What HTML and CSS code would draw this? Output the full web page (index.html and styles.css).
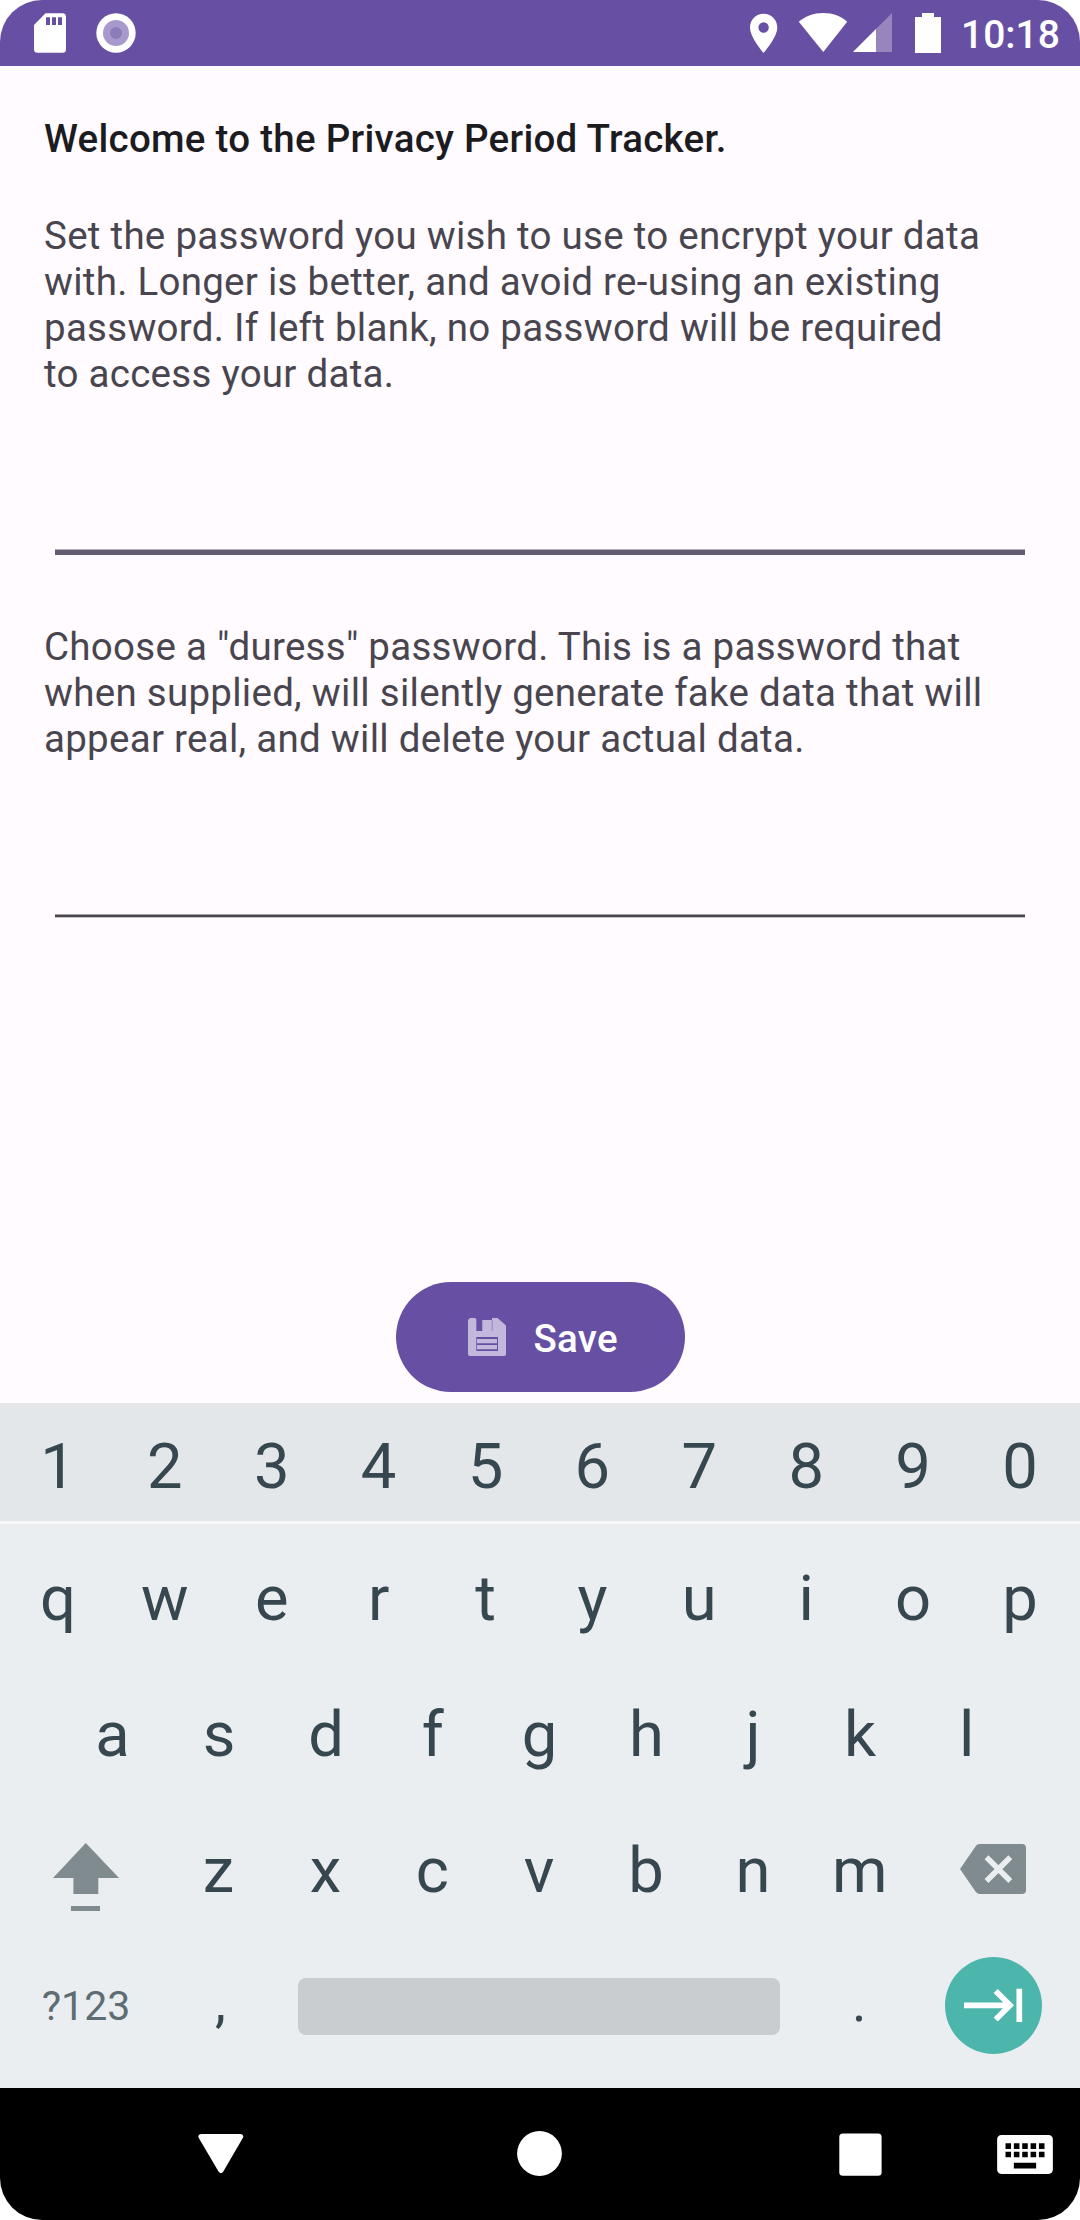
FILE: index.html
```html
<!DOCTYPE html>
<html lang="en">
<head>
<meta charset="utf-8">
<title>Privacy Period Tracker</title>
<link rel="stylesheet" href="styles.css">
</head>
<body>
<div class="screen">
  <header class="status">
    <div class="status-group">
      <svg width="32" height="40" viewBox="0 0 32 40"><path fill="#fff" fill-rule="evenodd" d="M11.500 0.300H28.500Q32 .3 32 3.800V36.200Q32 39.700 28.500 39.700H3.500Q0 39.700 0 36.200V12ZM12 4.300V12H16V4.300ZM18 4.300V12H22V4.300ZM24 4.300V12H28V4.300Z"/></svg>
      <svg class="ring" width="40" height="40" viewBox="0 0 40 40"><circle cx="20" cy="20" r="19.700" fill="#fff"/><circle cx="20" cy="20" r="13" fill="#a899cd"/><circle cx="20" cy="20" r="6" fill="#8e7bba"/></svg>
    </div>
    <div class="status-group">
      <svg width="28" height="40" viewBox="0 0 28 40"><path fill="#fff" fill-rule="evenodd" d="M13.600 .8C6 .8 0 6.800 0 14.500C0 24.500 13.600 40 13.600 40S27.300 24.500 27.300 14.500C27.300 6.800 21.200 .8 13.600 .8ZM13.600 9.300A5.200 5.200 0 1 1 13.600 19.700A5.200 5.200 0 1 1 13.600 9.300Z"/></svg>
      <svg class="wifi" width="50" height="40" viewBox="0 0 50 40"><path fill="#fff" d="M.8 8.700C7.500 3 15.500 0 25.300 0S43 3 49.200 8.700L25.300 39Z"/></svg>
      <svg class="signal" width="39" height="40" viewBox="0 0 39 40"><path fill="#9785bd" d="M0 39L39 0V39Z"/><path fill="#fff" d="M0 39L23 16V39Z"/></svg>
      <svg class="battery" width="26" height="40" viewBox="0 0 26 40"><path fill="#fff" d="M7 0H19V4H26V40H0V4H7Z"/></svg>
      <span class="clock">10:18</span>
    </div>
  </header>

  <main class="form">
    <h1 class="title">Welcome to the Privacy Period Tracker.</h1>
    <p class="hint">Set the password you wish to use to encrypt your data<br>with. Longer is better, and avoid re-using an existing<br>password. If left blank, no password will be required<br>to access your data.</p>
    <div class="field field-active"></div>
    <p class="hint hint-duress">Choose a "duress" password. This is a password that<br>when supplied, will silently generate fake data that will<br>appear real, and will delete your actual data.</p>
    <div class="field field-idle"></div>
    <button class="save">
      <svg width="38" height="38" viewBox="0 0 38 38"><path fill="#c3b8dc" fill-rule="evenodd" d="M2 0H7L8.300 1.300V13H14.300V2H24V0H29.500L38 7.500V36Q38 38 36 38H2Q0 38 0 36V2ZM8.300 19V33H30V19Z"/><path fill="#a595cb" d="M23.500 2H25V13H23.500Z"/><path fill="#c3b8dc" d="M9 21H29V25.200H9ZM9 27H29V31.200H9Z"/></svg>
      <span class="save-label">Save</span>
    </button>
  </main>

  <section class="keyboard">
    <div class="row digits"><span>1</span><span>2</span><span>3</span><span>4</span><span>5</span><span>6</span><span>7</span><span>8</span><span>9</span><span>0</span></div>
    <div class="row"><span>q</span><span>w</span><span>e</span><span>r</span><span>t</span><span>y</span><span>u</span><span>i</span><span>o</span><span>p</span></div>
    <div class="row row-home"><span>a</span><span>s</span><span>d</span><span>f</span><span>g</span><span>h</span><span>j</span><span>k</span><span>l</span></div>
    <div class="row row-shift">
      <svg class="shift" width="66" height="68" viewBox="0 0 66 68"><path fill="#808b8f" d="M32.800 0L66 35H45.300V51H20.400V35H0ZM18 63H47V68H18Z"/></svg>
      <span>z</span><span>x</span><span>c</span><span>v</span><span>b</span><span>n</span><span>m</span>
      <svg class="backspace" width="66" height="50" viewBox="0 0 66 50"><path fill="#808b8f" d="M19.500 0H62Q66 0 66 4V46Q66 50 62 50H19.500Q17 50 15.500 47.600L0 25L15.500 2.400Q17 0 19.500 0Z"/><path stroke="#ebeef1" stroke-width="5.500" d="M26.500 13.200L50.300 37M50.300 13.200L26.500 37"/></svg>
    </div>
    <div class="row row-space">
      <span class="symbols">?123</span>
      <span class="punct">,</span>
      <span class="space"></span>
      <span class="punct">.</span>
      <span class="next"><svg width="97" height="97" viewBox="0 0 97 97"><circle cx="48.500" cy="48.500" r="48.500" fill="#4db6ac"/><path fill="none" stroke="#fff" stroke-width="5.700" d="M19 48.300H64M50.700 34L65 48.300L50.700 62.600M74.300 31.700V65"/></svg></span>
    </div>
  </section>

  <nav class="nav">
    <svg width="46" height="40" viewBox="0 0 46 40"><path fill="#fff" d="M3 0H42.500Q46.500 .5 44.800 4L25.300 37.500Q23 41 20.500 37.500L.8 4Q-.9 .5 3 0Z"/></svg>
    <svg class="home" width="45" height="45" viewBox="0 0 45 45"><circle cx="22.500" cy="22.500" r="22.400" fill="#fff"/></svg>
    <svg class="recent" width="43" height="43" viewBox="0 0 43 43"><rect x=".3" y=".5" width="42.300" height="42.300" rx="3.500" fill="#fff"/></svg>
    <svg class="ime" width="56" height="39" viewBox="2 5 20 14"><path fill="#fff" d="M20.500 5H3.500C2.700 5 2 5.700 2 6.500V17.500C2 18.300 2.700 19 3.500 19H20.500C21.300 19 22 18.300 22 17.500V6.500C22 5.700 21.300 5 20.500 5zm-9.500 3h2v2h-2V8zm0 3h2v2h-2v-2zM8 8h2v2H8V8zm0 3h2v2H8v-2zm-1 2H5v-2h2v2zm0-3H5V8h2v2zm9 7H8v-2h8v2zm0-4h-2v-2h2v2zm0-3h-2V8h2v2zm3 3h-2v-2h2v2zm0-3h-2V8h2v2z"/></svg>
  </nav>
</div>
</body>
</html>
```
FILE: styles.css
```css
* { box-sizing: border-box; }

body {
  margin: 0;
  background: #fff;
  font-family: Roboto, "Liberation Sans", sans-serif;
}

svg { display: block; flex: none; }

.screen {
  display: flex;
  flex-direction: column;
  width: 1080px;
  height: 2220px;
  overflow: hidden;
  border-radius: 42px;
  background: #fffbff;
}

/* Status bar */
.status {
  display: flex;
  justify-content: space-between;
  height: 66px;
  padding: 13px 23px 0 34px;
  background: #6750a4;
}
.status-group { display: flex; }
.ring { margin-left: 30px; }
.wifi { margin-left: 20px; }
.signal { margin-left: 5px; }
.battery { margin-left: 23px; }
.clock {
  width: 96px;
  margin-left: 20px;
  color: #fff;
  font-size: 39px;
  font-weight: 500;
  line-height: 44px;
}

/* Password form */
.form {
  display: flex;
  flex-direction: column;
  height: 1337px;
  padding: 50px 44px 0;
}
.title, .hint {
  margin: 0;
  font-size: 38.5px;
  letter-spacing: 0.275px;
  line-height: 46px;
  white-space: nowrap;
}
.title {
  margin-bottom: 51px;
  color: #1c1b1f;
  font-weight: 500;
}
.hint { color: #49454f; }
.hint-duress { margin-top: 69px; }
.field { margin: 0 11px; }
/* underlines with a soft edge row */
.field-active {
  height: 158px;
  background: linear-gradient(to top, #625b71 5px, #b1adb8 5px, #b1adb8 6px, transparent 6px);
}
.field-idle {
  height: 156px;
  background: linear-gradient(to top, #c8c5cb 1px, #49454f 1px, #49454f 3px, #a4a0a7 3px, #a4a0a7 4px, transparent 4px);
}
.save {
  display: flex;
  align-items: center;
  align-self: center;
  width: 289px;
  height: 110px;
  margin-top: 364px;
  padding: 0 0 0 72px;
  gap: 28px;
  border: 0;
  border-radius: 55px;
  background: #6750a4;
  color: #fff;
  font: 500 38.5px/46px Roboto, "Liberation Sans", sans-serif;
  letter-spacing: 0.275px;
}
.save-label { padding-top: 3px; }

/* Keyboard */
.keyboard {
  height: 685px;
  background: #ebeef1;
  color: #37474f;
  font-size: 63.3px;
}
.row {
  display: flex;
  align-items: center;
  height: 136px;
  padding: 0 6px 0 4.5px;
}
.row > span {
  width: 106.9px;
  line-height: 80px;
  text-align: center;
}
.digits {
  height: 121px;
  margin-bottom: 6px;
  padding-top: 8px;
  border-bottom: 3px solid #f5f7f8;
  background: #e3e7e9;
}
.row-home { padding-left: 59px; }
.row-home > span { width: 106.8px; }
.row-shift { padding-left: 53px; }
.row-shift > span:nth-child(2) { margin-left: 46px; }
.shift { margin-top: 14px; }
.backspace { margin-left: 47px; margin-bottom: 2px; }
.row-space { padding-left: 5px; }
.row > .symbols {
  width: 162px;
  color: #5e6d72;
  font-size: 41px;
}
.row > .punct {
  padding-bottom: 8px;
  font-size: 55px;
}
.row > .space {
  width: 482px;
  height: 57px;
  margin: 0 26px 0 24px;
  border-radius: 8px;
  background: #c9cdd0;
}
.row > .next {
  width: 97px;
  margin: 0 0 1px 32px;
}

/* Navigation bar */
.nav {
  display: flex;
  align-items: center;
  height: 132px;
  padding-left: 198px;
  background: #000;
}
.home { margin: 0 0 1px 273px; }
.recent { margin-left: 277px; }
.ime { margin-left: 115px; }
```
